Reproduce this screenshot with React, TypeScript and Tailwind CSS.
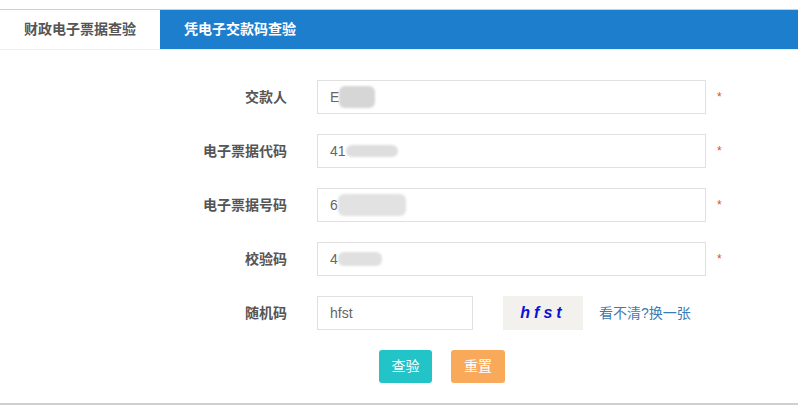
const fields = [
  { label: "交款人", prefix: "E", blob: "w-[36px] h-[22px] bg-[#d6d6d6]", req: true },
  { label: "电子票据代码", prefix: "41", blob: "w-[52px] h-[12px] bg-[#dedede]", req: true },
  { label: "电子票据号码", prefix: "6", blob: "w-[68px] h-[22px] bg-[#e2e2e2]", req: true },
  { label: "校验码", prefix: "4", blob: "w-[44px] h-[14px] bg-[#e0e0e0]", req: true },
];

function Label({ text }: { text: string }) {
  return (
    <div className="w-[287px] shrink-0 text-right text-[14px] font-bold text-[#555]">{text}</div>
  );
}

export default function App() {
  return (
    <div
      className="h-[405px] w-[798px] bg-white"
      style={{ fontFamily: '"Liberation Sans", "Noto Sans CJK SC", sans-serif' }}
    >
      <div className="pt-[9px]">
        <div className="flex h-[41px] border-t border-b border-t-[#cfcfcf] border-b-[#e6eef6] bg-[#1e7ece]">
          <div className="flex w-[160px] items-center justify-center bg-white text-[14px] font-bold text-[#555]">
            财政电子票据查验
          </div>
          <div className="flex w-[160px] items-center justify-center text-[14px] font-bold text-white">
            凭电子交款码查验
          </div>
        </div>
      </div>

      <div className="flex flex-col gap-[20px] border-b-2 border-[#d0d0d0] pt-[30px] pb-[20px]">
        {fields.map((f) => (
          <div key={f.label} className="flex h-[34px] items-center">
            <Label text={f.label} />
            <div className="ml-[30px] flex h-[34px] w-[389px] items-center border border-[#e0e0e0] pl-[12px] text-[14px] text-[#666]">
              <span>{f.prefix}</span>
              <span className={`inline-block rounded-[6px] blur-[1px] ${f.blob}`} />
            </div>
            {f.req && <span className="ml-[11px] -mt-[1px] text-[12px] text-[#e04848]">*</span>}
          </div>
        ))}

        <div className="flex h-[34px] items-center">
          <Label text="随机码" />
          <div className="ml-[30px] flex h-[34px] w-[156px] items-center border border-[#e0e0e0] pl-[12px] text-[14px] text-[#666]">
            hfst
          </div>
          <div className="ml-[30px] flex h-[34px] w-[80px] items-center justify-center bg-[#f3f1ed]">
            <span
              className="text-[16px] font-bold italic tracking-[4px] text-[#0a12d8]"
              style={{ fontFamily: '"Liberation Sans", sans-serif' }}
            >
              hfst
            </span>
          </div>
          <a className="ml-[16px] cursor-pointer text-[14px] text-[#3c7cb4]">看不清?换一张</a>
        </div>

        <div className="flex gap-[19px] pl-[379px]">
          <button className="h-[33px] w-[53px] rounded-[3px] bg-[#23c4c8] text-[14px] text-white">查验</button>
          <button className="h-[33px] w-[54px] rounded-[3px] bg-[#f8aa5a] text-[14px] text-white">重置</button>
        </div>
      </div>
    </div>
  );
}
